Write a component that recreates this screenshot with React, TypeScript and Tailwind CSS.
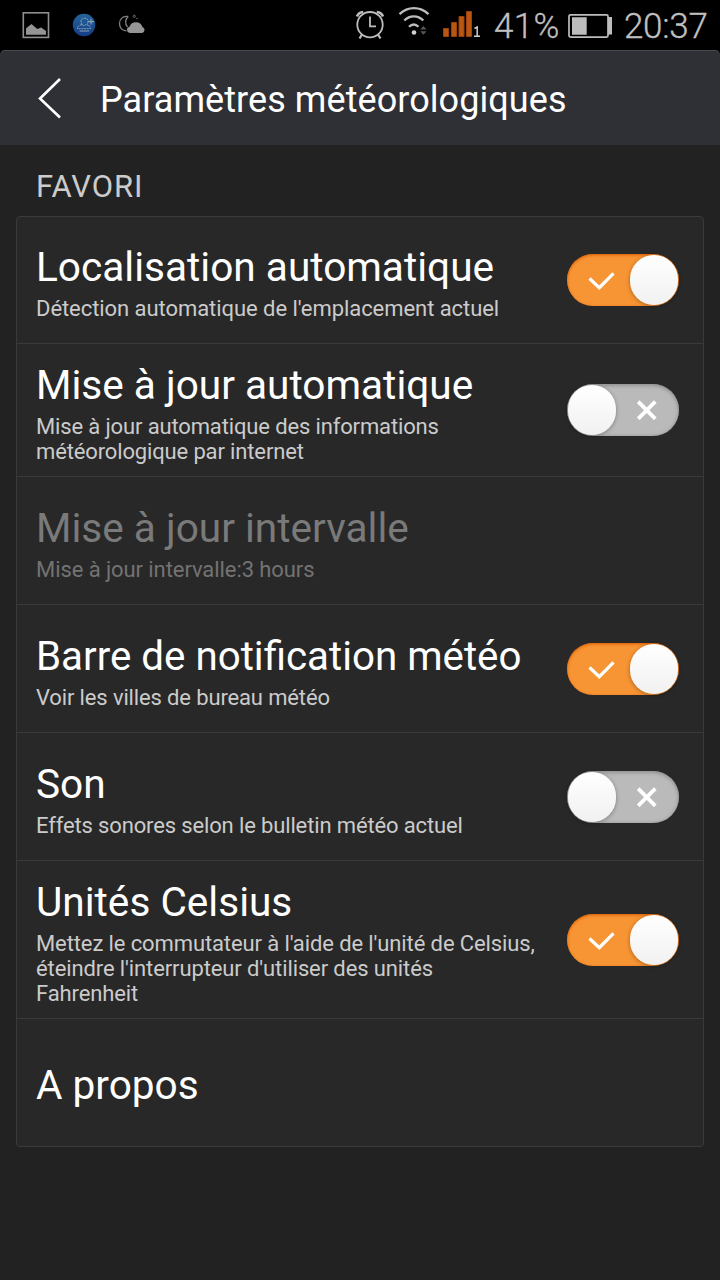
import React, {useState} from 'react';
import clsx from 'clsx';

interface Setting {
    id: string;
    title: string;
    summary?: string[];
    tracking?: string;
    on?: boolean;
    disabled?: boolean;
    height: string;
}

const settings: Setting[] = [
    {id: 'location', title: 'Localisation automatique', summary: ["Détection automatique de l'emplacement actuel"], tracking: 'tracking-[-0.06px]', on: true, height: 'h-[126px] pt-[4px]'},
    {id: 'update', title: 'Mise à jour automatique', summary: ['Mise à jour automatique des informations', 'météorologique par internet'], on: false, height: 'h-[133px] pt-[6px]'},
    {id: 'interval', title: 'Mise à jour intervalle', summary: ['Mise à jour intervalle:3 hours'], tracking: 'tracking-[-0.08px]', disabled: true, height: 'h-[128px] pt-[6px]'},
    {id: 'bar', title: 'Barre de notification météo', summary: ['Voir les villes de bureau météo'], on: true, height: 'h-[128px] pt-[6px]'},
    {id: 'sound', title: 'Son', summary: ['Effets sonores selon le bulletin météo actuel'], on: false, height: 'h-[128px] pt-[6px]'},
    {id: 'celsius', title: 'Unités Celsius', summary: ["Mettez le commutateur à l'aide de l'unité de Celsius,", "éteindre l'interrupteur d'utiliser des unités", 'Fahrenheit'], tracking: 'tracking-[-0.11px]', on: true, height: 'h-[158px] pt-[6px]'},
    {id: 'about', title: 'A propos', height: 'h-[128px] pt-[6px]'},
];

function StatusBar() {
    return (
        <div className="flex h-[50px] shrink-0 items-center bg-black text-[#c0c0c0]">
            <svg className="shrink-0" width="160" height="50" viewBox="0 0 160 50">
                <rect x="23.3" y="12.8" width="25.2" height="24.6" fill="none" stroke="#8f8f8f" strokeWidth="1.6"/>
                <path d="M26 34.7v-6.200l2-1.700 3.500-2.800 4 3.500 2 1.500 3.500-1.500 1.500 1 3.500 2.500v3.700z" fill="#949494"/>
                <defs>
                    <linearGradient id="globe" x1="0" y1="0" x2="0" y2="1">
                        <stop offset="0" stopColor="#24659a"/>
                        <stop offset="1" stopColor="#143c86"/>
                    </linearGradient>
                </defs>
                <circle cx="84" cy="25" r="11.2" fill="url(#globe)"/>
                <g fill="none" stroke="#8aa3b5" strokeWidth="1">
                    <path d="M82 24.500c-2-4-1-6.200 2.500-6.200s4.500 2.200 2.500 6.200" strokeDasharray="2 .7"/>
                    <path d="M82 24.500c-3.500.8-5 2.500-4.700 4.200h13.400c.3-1.700-1.200-3.400-4.700-4.200l-2 1.500z" strokeDasharray="2 .7"/>
                    <path d="M79.500 31h9.500M91 19v5.500M88 21.700h6" strokeWidth="1.2"/>
                </g>
                <path d="M128.200 16.500C122.500 15.500 119.500 19.500 119.500 23.500C119.500 28 122.500 31 126.500 30.800M128.200 16.500C125 19.500 124.800 24 127.500 27" fill="none" stroke="#808080" strokeWidth="1.3"/>
                <circle cx="134.3" cy="16.3" r="1.1" fill="none" stroke="#777" strokeWidth=".9"/>
                <circle cx="137" cy="18.500" r=".7" fill="#777"/>
                <path d="M129.800 33a3.200 3.200 0 0 1-.3-6.300 6.900 6.900 0 0 1 13 .2 3.200 3.200 0 0 1-.4 6.100z" fill="#959595"/>
            </svg>
            <svg className="ml-auto shrink-0" width="130" height="50" viewBox="350 0 130 50">
                <g fill="none" stroke="#bdbdbd" strokeWidth="1.8">
                    <circle cx="370" cy="24.7" r="12.7"/>
                    <path d="M370 16.500v9.800h6"/>
                    <path d="M362 34.500l-2.500 4M378 34.500l2.500 4" strokeWidth="2.2"/>
                    <path d="M357 16.500c1-2.700 3.200-4.300 6.200-4.500M383 16.500c-1-2.700-3.200-4.300-6.200-4.500" strokeWidth="2.7"/>
                </g>
                <g fill="none" stroke="#bdbdbd" strokeWidth="2.3">
                    <path d="M399.500 14.200c8.500-8 20.500-8 29 0"/>
                    <path d="M404.300 20.500c5.500-5.500 13.500-5.500 19 0"/>
                    <path d="M409 26.800c3-3 6.500-3 9.500 0"/>
                </g>
                <circle cx="414" cy="32.5" r="2.3" fill="#d0d0d0"/>
                <path d="M420.200 29.500l3.200-3.500 3.200 3.500zM420.200 31.300h6.400l-3.200 3.500z" fill="#555"/>
                <g fill="#b85714" stroke="#9a4008" strokeWidth="1">
                    <path d="M443.500 28.500h5v8h-5zM451.500 22.500h5v14h-5zM459 16.500h5v20h-5zM466.500 11.500h5v25h-5z"/>
                </g>
                <path d="M474.500 28.500l2.700-1.500v9.300M474 36.300h6" fill="none" stroke="#cfcfcf" strokeWidth="1.5"/>
            </svg>
            <span className="ml-[14px] w-[66px] whitespace-nowrap pt-[4px] text-[35px] leading-[46px] font-light tracking-[0.3px] [-webkit-text-stroke:0.3px_#c0c0c0]">41%</span>
            <svg className="ml-[6px] shrink-0" width="48" height="50" viewBox="566 0 48 50">
                <rect x="569" y="14.8" width="39" height="22.3" rx="1.5" fill="none" stroke="#bdbdbd" strokeWidth="1.7"/>
                <path d="M572 17.300h14.700v17.400H572zM608 17h4v17.500h-4z" fill="#bdbdbd"/>
            </svg>
            <span className="ml-[10px] w-[96px] whitespace-nowrap pt-[4px] text-[35px] leading-[46px] font-light tracking-[-0.3px] [-webkit-text-stroke:0.3px_#c0c0c0]">20:37</span>
        </div>
    );
}

function Switch({on, label, onChange}: { on: boolean; label: string; onChange: () => void }) {
    return (
        <button
            type="button"
            role="switch"
            aria-checked={on}
            aria-label={label}
            onClick={onChange}
            className={clsx(
                'flex h-[52px] w-[112px] shrink-0 items-center rounded-full',
                on
                    ? 'flex-row-reverse bg-[#f79433] shadow-[inset_0_1px_3px_#d95b00]'
                    : 'bg-[#bababa] shadow-[inset_0_1px_4px_#808080]'
            )}
        >
            <span className="mx-px h-[50px] w-[48px] shrink-0 rounded-full bg-linear-to-b from-white to-[#f1f1f1] shadow-[0_1px_4px_#00000055]"/>
            {on ? (
                <svg className="mr-[14px]" width="28" height="20" viewBox="0 0 28 20">
                    <path d="M2.500 8.500L12.300 17.700L26.500 3.300" fill="none" stroke="#fff" strokeWidth="3.2"/>
                </svg>
            ) : (
                <svg className="ml-[20px]" width="20" height="20" viewBox="0 0 20 20">
                    <path d="M1.200 1.700L18.300 18.800M18.300 1.700L1.200 18.800" fill="none" stroke="#fff" strokeWidth="3.8"/>
                </svg>
            )}
        </button>
    );
}

export default function App() {
    const [values, setValues] = useState<{ [key: string]: boolean }>(
        Object.fromEntries(settings.map(s => [s.id, !!s.on]))
    );

    const toggle = (id: string) => {
        setValues(prev => ({...prev, [id]: !prev[id]}));
    };

    return (
        <div className="flex h-[1280px] w-[720px] flex-col overflow-hidden bg-black font-[Roboto,sans-serif]">
            <StatusBar/>
            <header className="flex h-[95px] shrink-0 items-center rounded-t-[5px] border-t border-[#484c50] bg-[#2e3035] text-white">
                <svg className="ml-[36px] shrink-0" width="28" height="44" viewBox="0 0 28 44">
                    <path d="M24 3L4 22.500L24 41.500" fill="none" stroke="#fff" strokeWidth="2.6"/>
                </svg>
                <h1 className="ml-[36px] whitespace-nowrap pt-[4px] text-[36px] leading-[42px] tracking-[0.07px]">Paramètres météorologiques</h1>
            </header>
            <main className="flex-1 bg-[#222222] px-4">
                <h2 className="h-[71px] pt-[24px] pl-5 text-[31px] leading-[36px] tracking-[0.9px] text-[#cbcbcb]">FAVORI</h2>
                <ul className="rounded-[4px] border border-[#3a3a3a] bg-[#282828]">
                    {settings.map((s, i) => (
                        <li
                            key={s.id}
                            className={clsx(
                                'flex items-center justify-between pl-[19px] pr-6',
                                i > 0 && 'border-t border-[#3a3a3a]',
                                s.height
                            )}
                        >
                            <div className="whitespace-nowrap">
                                <p
                                    className={clsx(
                                        'leading-[47px]',
                                        s.id === 'bar' ? 'text-[40.3px]' : 'text-[40.6px]',
                                        s.disabled ? 'text-[#7a7a7a]' : 'text-white'
                                    )}
                                >
                                    {s.title}
                                </p>
                                {s.summary && (
                                    <div
                                        className={clsx(
                                            'mt-[5px] text-[22px] leading-[25px]',
                                            s.tracking || 'tracking-[-0.14px]',
                                            s.disabled ? 'text-[#737373]' : 'text-[#cbcbcb]'
                                        )}
                                    >
                                        {s.summary.map(line => <p key={line}>{line}</p>)}
                                    </div>
                                )}
                            </div>
                            {s.on !== undefined && (
                                <div className={i === 0 ? 'pb-[4px]' : 'pb-[6px]'}>
                                    <Switch on={values[s.id]} label={s.title} onChange={() => toggle(s.id)}/>
                                </div>
                            )}
                        </li>
                    ))}
                </ul>
            </main>
        </div>
    );
}
